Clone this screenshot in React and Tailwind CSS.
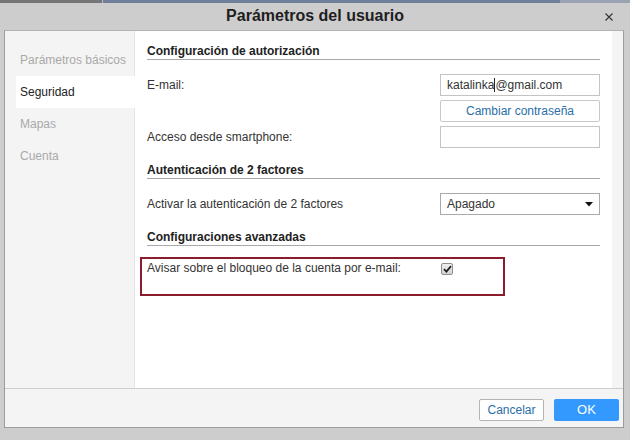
import { useState } from "react";

const font = { fontFamily: '"Liberation Sans", Arial, sans-serif' };

const navItems = ["Parámetros básicos", "Seguridad", "Mapas", "Cuenta"];

function SectionHeader({ children, className = "" }) {
  return (
    <div className={`h-[16px] border-b border-[#a9a9a9] text-[12px] leading-[15px] font-bold text-[#222] ${className}`}>
      {children}
    </div>
  );
}

function Row({ label, children }) {
  return (
    <div className="flex items-center h-[22px]">
      <div className="flex-1 text-[12px] text-[#333]">{label}</div>
      <div className="w-[160px] h-[22px]">{children}</div>
    </div>
  );
}

export default function App() {
  const [active, setActive] = useState(1);
  const [notify, setNotify] = useState(true);

  return (
    <div className="w-[630px] h-[440px] bg-[#cdcdcd] overflow-hidden flex flex-col" style={font}>
      {/* strip of the page behind the dialog */}
      <div className="h-[3px] flex">
        <div className="w-[102px] bg-[#767676]" />
        <div className="w-px bg-[#b9b9b9]" />
        <div className="flex-1 bg-[#6f7f9c]" />
        <div className="w-[70px] bg-[#9aa3b3]" />
      </div>

      {/* title bar */}
      <div className="h-[27px] relative flex justify-center pt-[4px]">
        <span className="text-[16px] leading-[18px] font-bold text-[#1e1e1e]">Parámetros del usuario</span>
        <button className="absolute right-[17px] top-[10px] w-[8px] h-[8px]">
          <svg width="8" height="8" viewBox="0 0 8 8">
            <path d="M0.5 0.5 L7.5 7.5 M7.5 0.5 L0.5 7.5" stroke="#333" strokeWidth="1.1" />
          </svg>
        </button>
      </div>

      {/* dialog body */}
      <div className="ml-[4px] w-[620px] h-[398px] border border-[#9c9c9c] border-t-[#b3b3b3] bg-[#f4f4f4] flex flex-col">
        <div className="h-[357px] flex">
          <nav className="w-[130px] border-r border-[#e4e4e4] pt-[13px]">
            {navItems.map((item, i) => (
              <div
                key={item}
                onClick={() => setActive(i)}
                className={`ml-[11px] mr-[-1px] h-[32px] pl-[4px] flex items-center text-[12px] cursor-pointer ${
                  i === active ? "bg-white text-[#222]" : "text-[#a9a9a9]"
                }`}
              >
                {item}
              </div>
            ))}
          </nav>

          <div className="w-[477px] bg-white px-[12px] pt-[13px]">
            <SectionHeader>Configuración de autorización</SectionHeader>

            <div className="mt-[14px] flex flex-col gap-[4px]">
              <Row label="E-mail:">
                <div className="h-full border border-[#c4c4c4] px-[6px] flex items-center text-[12px] text-[#333]">
                  katalinka
                  <span className="inline-block w-px h-[14px] bg-[#222]" />
                  @gmail.com
                </div>
              </Row>
              <div className="flex h-[22px] justify-end">
                <button className="w-[160px] h-full border border-[#c8c8c8] rounded-[2px] bg-white text-[12px] text-[#2a6ea6]">
                  Cambiar contraseña
                </button>
              </div>
              <Row label="Acceso desde smartphone:">
                <div className="h-full border border-[#c4c4c4]" />
              </Row>
            </div>

            <SectionHeader className="mt-[15px]">Autenticación de 2 factores</SectionHeader>

            <div className="mt-[14px]">
              <Row label="Activar la autenticación de 2 factores">
                <div className="h-full border border-[#aaaaaa] pl-[6px] pr-[6px] flex items-center justify-between text-[12px] text-[#333]">
                  <span>Apagado</span>
                  <svg width="8" height="5" viewBox="0 0 8 5">
                    <path d="M0 0 H8 L4 4.5 Z" fill="#111" />
                  </svg>
                </div>
              </Row>
            </div>

            <SectionHeader className="mt-[15px]">Configuraciones avanzadas</SectionHeader>

            <div className="mt-[11px] -ml-[7px] w-[365px] h-[39px] border-2 border-[#8a1c2b] pl-[5px] pt-[2px] flex items-start">
              <div className="w-[293px] text-[12px] leading-[15px] text-[#333]">
                Avisar sobre el bloqueo de la cuenta por e-mail:
              </div>
              <button
                onClick={() => setNotify(!notify)}
                className="ml-[1px] mt-[2px] w-[12px] h-[12px] rounded-[2px] border border-[#8f8f8f] bg-gradient-to-b from-[#f0f0f0] to-[#d2d2d2] flex items-center justify-center"
              >
                {notify && (
                  <svg width="9" height="8" viewBox="0 0 9 8">
                    <path d="M1 4.2 L3.4 6.6 L8 1.2" stroke="#222" strokeWidth="1.8" fill="none" />
                  </svg>
                )}
              </button>
            </div>
          </div>

          <div className="flex-1" />
        </div>

        {/* footer */}
        <div className="flex-1 border-t border-[#cccccc] flex justify-end items-start pt-[10px] pr-[4px] gap-[10px]">
          <button className="w-[65px] h-[22px] rounded-[2px] border border-[#b4b4b4] bg-white text-[12px] text-[#2a6ea6]">
            Cancelar
          </button>
          <button className="w-[65px] h-[22px] rounded-[2px] bg-[#3399ff] text-[13px] text-white">
            OK
          </button>
        </div>
      </div>
    </div>
  );
}
